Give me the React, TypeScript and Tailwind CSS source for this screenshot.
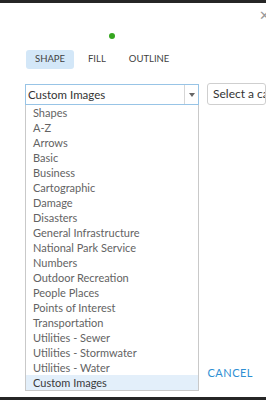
const categories = [
  "Shapes",
  "A-Z",
  "Arrows",
  "Basic",
  "Business",
  "Cartographic",
  "Damage",
  "Disasters",
  "General Infrastructure",
  "National Park Service",
  "Numbers",
  "Outdoor Recreation",
  "People Places",
  "Points of Interest",
  "Transportation",
  "Utilities - Sewer",
  "Utilities - Stormwater",
  "Utilities - Water",
  "Custom Images",
];

export default function App() {
  const selected = "Custom Images";

  return (
    <div className="relative w-[266px] h-[400px] overflow-hidden bg-white font-['Lato',sans-serif] flex flex-col">
      {/* top strip */}
      <div className="h-[3px] bg-[#262626] shrink-0" />

      {/* close */}
      <span className="absolute right-[-4px] top-[9px] text-[13px] leading-none text-[#9a9a9a]">✕</span>

      {/* status dot */}
      <div className="flex pl-[109px] pt-[30px] shrink-0">
        <div className="w-[6px] h-[6px] rounded-full bg-[#35a61f]" />
      </div>

      {/* tabs */}
      <div className="flex items-center pl-[26px] pt-[11px] gap-[2px] shrink-0">
        <button className="h-[19px] w-[48px] rounded-[3px] bg-[#d3e7f8] text-[9.5px] text-[#3f3f3f]">SHAPE</button>
        <button className="h-[19px] px-[12px] text-[9.5px] text-[#3f3f3f]">FILL</button>
        <button className="h-[19px] px-[9px] text-[9.5px] text-[#3f3f3f]">OUTLINE</button>
      </div>

      {/* selects */}
      <div className="flex items-start pl-[25px] pt-[15px] gap-[8px] shrink-0">
        <div className="relative w-[174px]">
          <div className="flex h-[21px] border border-[#98c4e6] bg-white">
            <span className="flex-1 pl-[2px] text-[11.5px] leading-[19px] text-[#333]">{selected}</span>
            <span className="w-[14px] border-l border-[#d6d6d6] flex items-center justify-center">
              <svg width="6" height="4" viewBox="0 0 6 4">
                <path d="M0 0h6L3 4z" fill="#666" />
              </svg>
            </span>
          </div>
          <ul className="absolute left-0 top-[21px] w-[174px] border border-t-0 border-[#c9c9c9] bg-white">
            {categories.map((c) => (
              <li
                key={c}
                className={
                  c === selected
                    ? "h-[15px] pl-[7px] text-[11px] leading-[15px] text-[#3a3a3a] bg-[#e3effa]"
                    : "h-[15px] pl-[7px] text-[11px] leading-[15px] text-[#636363]"
                }
              >
                {c}
              </li>
            ))}
          </ul>
        </div>
        <div className="h-[22px] mt-[-1px] flex-1 rounded-[3px] border border-[#cfcfcf] pl-[5px] text-[12px] leading-[20px] text-[#333] whitespace-nowrap overflow-hidden">
          Select a category
        </div>
      </div>

      {/* footer */}
      <div className="mt-auto flex justify-end pr-[13px] pb-[16px]">
        <button className="text-[11px] tracking-[0.5px] text-[#2e8fd3]">CANCEL</button>
      </div>

      {/* bottom strip */}
      <div className="h-[3px] bg-[#262626] shrink-0" />
    </div>
  );
}
